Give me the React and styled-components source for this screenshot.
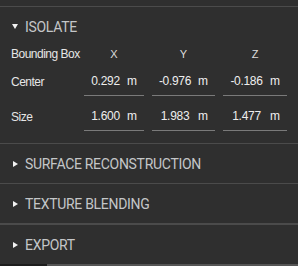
import styled, { createGlobalStyle } from "styled-components";

const Global = createGlobalStyle`
  html, body {
    margin: 0;
    padding: 0;
    background: #2f2f2f;
  }
  body {
    font-family: "Liberation Sans", Arial, sans-serif;
  }
`;

const rows = [
  { label: "Center", values: ["0.292", "-0.976", "-0.186"] },
  { label: "Size", values: ["1.600", "1.983", "1.477"] },
];

export default function App() {
  return (
    <>
      <Global />
      <Panel>
        <Section>
          <Header>
            <Arrow open />
            ISOLATE
          </Header>
          <Table>
            <Label>Bounding Box</Label>
            <Axis>X</Axis>
            <Axis>Y</Axis>
            <Axis>Z</Axis>
            {rows.map((row) => (
              <Row key={row.label}>
                <Label>{row.label}</Label>
                {row.values.map((v, i) => (
                  <Field key={i}>
                    <Value>{v}</Value>
                    <Unit>m</Unit>
                  </Field>
                ))}
              </Row>
            ))}
          </Table>
        </Section>
        <Section>
          <Header>
            <Arrow />
            SURFACE RECONSTRUCTION
          </Header>
        </Section>
        <Section>
          <Header>
            <Arrow />
            TEXTURE BLENDING
          </Header>
        </Section>
        <Section thick>
          <Header>
            <Arrow />
            EXPORT
          </Header>
        </Section>
        <BottomBar>
          <span />
        </BottomBar>
      </Panel>
    </>
  );
}

const Panel = styled.div`
  width: 298px;
  height: 266px;
  padding-top: 6px;
  box-sizing: border-box;
  background: #2f2f2f;
  display: flex;
  flex-direction: column;
  overflow: hidden;
`;

const Section = styled.section`
  border-top: ${(p) => (p.thick ? "2px" : "1px")} solid #4b4b4b;
`;

const Header = styled.div`
  height: 39px;
  display: flex;
  align-items: center;
  padding-left: 12px;
  font-family: Roboto, "Liberation Sans", sans-serif;
  font-size: 14px;
  letter-spacing: -0.3px;
  color: #c4c6c8;
`;

const Arrow = styled.span`
  width: 0;
  height: 0;
  ${(p) =>
    p.open
      ? `
    border-left: 3px solid transparent;
    border-right: 3px solid transparent;
    border-top: 5px solid #f2f2f2;
    margin-right: 7px;
  `
      : `
    border-top: 3px solid transparent;
    border-bottom: 3px solid transparent;
    border-left: 5px solid #f2f2f2;
    margin-left: 1px;
    margin-right: 7px;
  `}
`;

const Table = styled.div`
  display: grid;
  grid-template-columns: 65px 60px 63px 64px;
  grid-template-rows: 15px 29px 29px;
  column-gap: 8px;
  row-gap: 6px;
  padding: 0 0 12px 11px;
`;

const Row = styled.div`
  display: contents;
`;

const Label = styled.div`
  display: flex;
  align-items: center;
  font-size: 12px;
  letter-spacing: -0.5px;
  color: #e6e6e6;
  white-space: nowrap;
`;

const Axis = styled.div`
  display: flex;
  align-items: center;
  justify-content: center;
  font-size: 11px;
  color: #dcdcdc;
`;

const Field = styled.div`
  display: flex;
  align-items: center;
  border-bottom: 1px solid #7a7a7a;
  font-size: 12px;
  letter-spacing: -0.3px;
  color: #eeeeee;
`;

const Value = styled.span`
  flex: 1;
  text-align: center;
`;

const Unit = styled.span`
  width: 17px;
`;

const BottomBar = styled.div`
  margin-top: auto;
  height: 2px;
  background: #555555;
  span {
    display: block;
    width: 47px;
    height: 2px;
    background: #1d1d1d;
  }
`;
